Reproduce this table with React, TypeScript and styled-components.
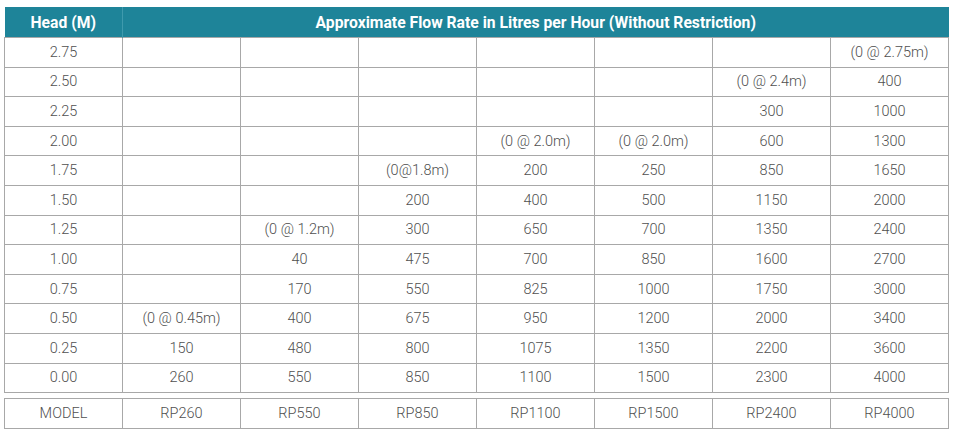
import * as React from 'react';
import styled, { createGlobalStyle } from 'styled-components';

const GlobalStyle = createGlobalStyle`
  html, body {
    margin: 0;
    padding: 0;
    background: #ffffff;
  }
  body {
    font-family: Roboto, "Noto Sans", "Liberation Sans", sans-serif;
  }
`;

const Page = styled.div`
  padding: 7px 4px 0 4px;
  width: 945px;
`;

const Table = styled.table`
  width: 945px;
  border-collapse: collapse;
  table-layout: fixed;
`;

const HeadCell = styled.th`
  background: #1e8499;
  color: #ffffff;
  font-family: Roboto, "Open Sans", sans-serif;
  font-weight: 700;
  font-size: 15.7px;
  height: 30px;
  padding: 0;
  text-align: center;
  border-left: 1px solid #3f9aad;
  &:first-child {
    border-left: none;
  }
`;

const Cell = styled.td<{ $h?: number }>`
  height: ${(p) => p.$h ?? 28.6}px;
  padding: 0;
  text-align: center;
  font-size: 14.5px;
  font-weight: 300;
  color: #505050;
  border: 1px solid #a8a8a8;
`;

const Gap = styled.div`
  height: 5px;
`;

const heads = ['2.75', '2.50', '2.25', '2.00', '1.75', '1.50', '1.25', '1.00', '0.75', '0.50', '0.25', '0.00'];

const data: string[][] = [
  ['', '', '', '', '', '', '(0 @ 2.75m)'],
  ['', '', '', '', '', '(0 @ 2.4m)', '400'],
  ['', '', '', '', '', '300', '1000'],
  ['', '', '', '(0 @ 2.0m)', '(0 @ 2.0m)', '600', '1300'],
  ['', '', '(0@1.8m)', '200', '250', '850', '1650'],
  ['', '', '200', '400', '500', '1150', '2000'],
  ['', '(0 @ 1.2m)', '300', '650', '700', '1350', '2400'],
  ['', '40', '475', '700', '850', '1600', '2700'],
  ['', '170', '550', '825', '1000', '1750', '3000'],
  ['(0 @ 0.45m)', '400', '675', '950', '1200', '2000', '3400'],
  ['150', '480', '800', '1075', '1350', '2200', '3600'],
  ['260', '550', '850', '1100', '1500', '2300', '4000'],
];

const models = ['RP260', 'RP550', 'RP850', 'RP1100', 'RP1500', 'RP2400', 'RP4000'];

export default function App() {
  return (
    <Page>
      <GlobalStyle />
      <Table>
        <colgroup>
          {Array.from({ length: 8 }).map((_, i) => (
            <col key={i} style={{ width: '12.5%' }} />
          ))}
        </colgroup>
        <thead>
          <tr>
            <HeadCell>Head (M)</HeadCell>
            <HeadCell colSpan={7}>Approximate Flow Rate in Litres per Hour (Without Restriction)</HeadCell>
          </tr>
        </thead>
        <tbody>
          {data.map((row, r) => (
            <tr key={r}>
              <Cell>{heads[r]}</Cell>
              {row.map((v, c) => (
                <Cell key={c}>{v}</Cell>
              ))}
            </tr>
          ))}
        </tbody>
      </Table>
      <Gap />
      <Table>
        <tbody>
          <tr>
            <Cell $h={29}>MODEL</Cell>
            {models.map((m) => (
              <Cell key={m} $h={29}>{m}</Cell>
            ))}
          </tr>
        </tbody>
      </Table>
    </Page>
  );
}
